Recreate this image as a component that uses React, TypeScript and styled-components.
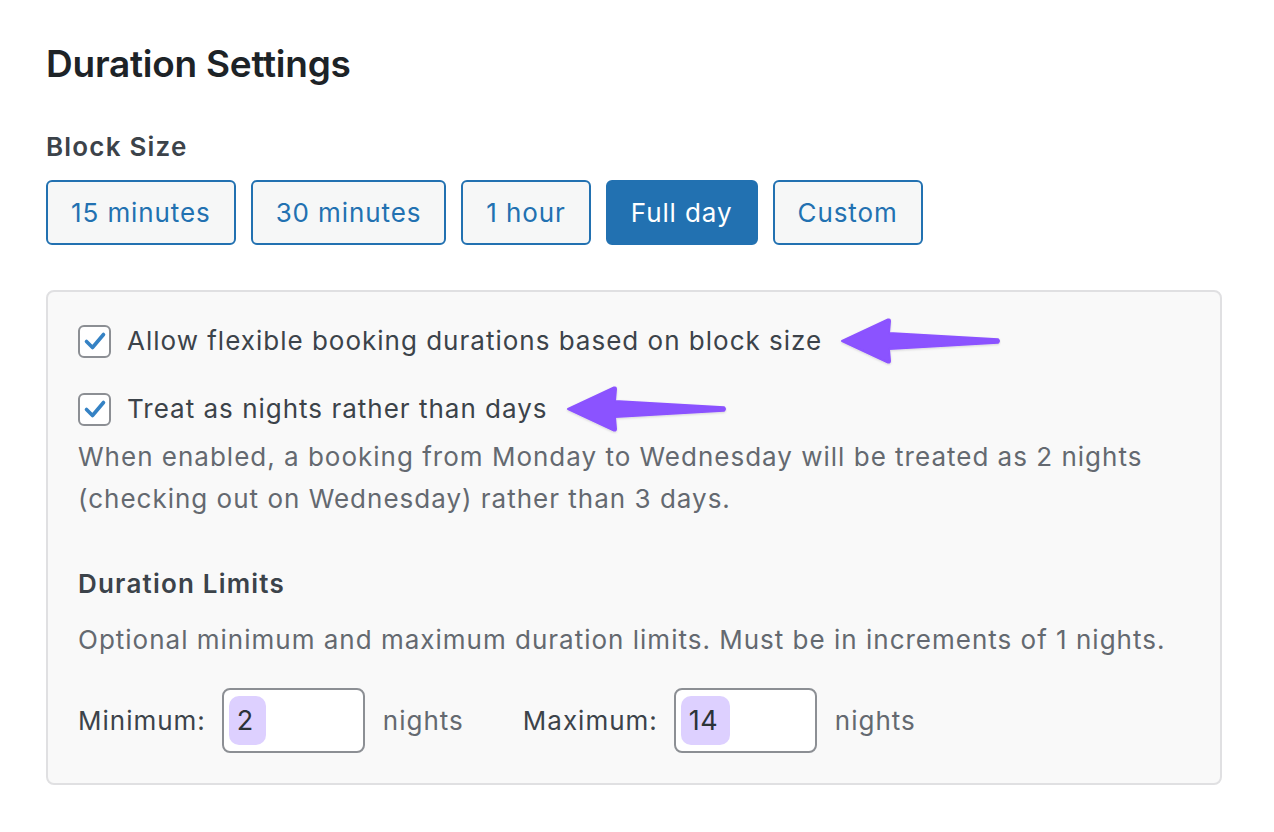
import React from 'react'
import styled, { createGlobalStyle } from 'styled-components'

const GlobalStyle = createGlobalStyle`
  html, body {
    margin: 0;
    padding: 0;
    background: #ffffff;
  }
  body {
    font-family: Inter, "Noto Sans", "Liberation Sans", sans-serif;
    -webkit-font-smoothing: antialiased;
  }
`

const Page = styled.div`
  width: 1274px;
  height: 832px;
  box-sizing: border-box;
  padding: 42px 52px 0 46px;
`

const Title = styled.h2`
  margin: 0;
  font-size: 37px;
  line-height: 44px;
  font-weight: 600;
  color: #1d2327;
  letter-spacing: -0.25px;
`

const FieldLabel = styled.div`
  margin-top: 42px;
  font-size: 26px;
  line-height: 38px;
  font-weight: 600;
  color: #3c434a;
  letter-spacing: 1.2px;
`

const ButtonGroup = styled.div`
  display: flex;
  gap: 15px;
  margin-top: 14px;
`

const SizeButton = styled.button<{ $active?: boolean }>`
  height: 65px;
  box-sizing: border-box;
  padding: 0 23px;
  border: 2px solid #2271b1;
  border-radius: 6px;
  background: ${({ $active }) => ($active ? '#2271b1' : '#f6f7f7')};
  color: ${({ $active }) => ($active ? '#ffffff' : '#2271b1')};
  font-family: inherit;
  font-size: 26px;
  font-weight: 400;
  letter-spacing: 0.9px;
  cursor: pointer;
`

const Panel = styled.div`
  margin-top: 45px;
  box-sizing: border-box;
  width: 1176px;
  height: 495px;
  padding: 32px 30px 0 30px;
  border: 2px solid #e0e0e2;
  border-radius: 8px;
  background: #f9f9f9;
  font-size: 26px;
  letter-spacing: 1px;
`

const CheckRow = styled.label<{ $gap?: number }>`
  display: flex;
  align-items: center;
  gap: 16px;
  margin-top: ${({ $gap }) => $gap ?? 0}px;
  line-height: 34px;
  color: #3c434a;
`

const Box = styled.span`
  display: inline-flex;
  align-items: center;
  justify-content: center;
  width: 33px;
  height: 33px;
  box-sizing: border-box;
  border: 2px solid #8c8f94;
  border-radius: 6px;
  background: #ffffff;
  flex-shrink: 0;
`

const ArrowSlot = styled.span`
  display: inline-flex;
  margin: -12px 0 -12px 1px;
`

const Description = styled.p`
  margin: 10px 0 0;
  line-height: 42px;
  color: #646970;
`

const SubHeading = styled.h3`
  margin: 46px 0 0;
  font-size: 26px;
  line-height: 36px;
  font-weight: 600;
  color: #3c434a;
  letter-spacing: 1.2px;
`

const Hint = styled.p`
  margin: 19px 0 0;
  line-height: 38px;
  color: #646970;
`

const LimitsRow = styled.div`
  display: flex;
  align-items: center;
  margin-top: 29px;
  color: #3c434a;
`

const LimitLabel = styled.span<{ $offset?: number }>`
  margin-left: ${({ $offset }) => $offset ?? 0}px;
  margin-right: 16px;
`

const Unit = styled.span`
  margin-left: 18px;
  color: #646970;
`

const NumberBox = styled.div`
  display: flex;
  align-items: center;
  width: 143px;
  height: 65px;
  box-sizing: border-box;
  padding-left: 5px;
  border: 2px solid #8c8f94;
  border-radius: 8px;
  background: #ffffff;
`

const Highlight = styled.span`
  display: inline-flex;
  align-items: center;
  height: 49px;
  padding: 0 12px 0 8px;
  border-radius: 10px;
  background: #ddd0ff;
  color: #2c3338;
  font-size: 27px;
  letter-spacing: 0.5px;
`

const Check = () => (
  <Box>
    <svg width="24" height="24" viewBox="0 0 24 24">
      <path
        d="M3.5 12.5 L9.5 18.5 L20.5 5.5"
        fill="none"
        stroke="#3582c4"
        strokeWidth="3.6"
        strokeLinecap="round"
        strokeLinejoin="round"
      />
    </svg>
  </Box>
)

// annotation arrow, tip on the left
const Arrow = ({ id, length }: { id: string; length: number }) => (
  <svg width={length} height="50" viewBox={`0 0 ${length} 50`}>
    <defs>
      <filter id={id} x="-10%" y="-30%" width="120%" height="160%">
        <feDropShadow dx="0" dy="1" stdDeviation="1.2" floodColor="#000" floodOpacity="0.15" />
      </filter>
    </defs>
    <path
      d={`M3 25 L49 3.5 Q51 3 51 5 L50 17 L${length - 3} 23.2 Q${length - 1} 25 ${length - 3} 26.8 L50 33 L51 45 Q51 47 49 46.5 Z`}
      fill="#8b52ff"
      stroke="#8b52ff"
      strokeWidth="2"
      strokeLinejoin="round"
      filter={`url(#${id})`}
    />
  </svg>
)

const App = () => (
  <>
    <GlobalStyle />
    <Page>
      <Title>Duration Settings</Title>
      <FieldLabel>Block Size</FieldLabel>
      <ButtonGroup>
        <SizeButton>15 minutes</SizeButton>
        <SizeButton>30 minutes</SizeButton>
        <SizeButton>1 hour</SizeButton>
        <SizeButton $active>Full day</SizeButton>
        <SizeButton>Custom</SizeButton>
      </ButtonGroup>
      <Panel>
        <CheckRow>
          <Check />
          Allow flexible booking durations based on block size
          <ArrowSlot>
            <Arrow id="arrow-a" length={162} />
          </ArrowSlot>
        </CheckRow>
        <CheckRow $gap={34}>
          <Check />
          Treat as nights rather than days
          <ArrowSlot>
            <Arrow id="arrow-b" length={162} />
          </ArrowSlot>
        </CheckRow>
        <Description>
          When enabled, a booking from Monday to Wednesday will be treated as 2 nights
          <br />
          (checking out on Wednesday) rather than 3 days.
        </Description>
        <SubHeading>Duration Limits</SubHeading>
        <Hint>Optional minimum and maximum duration limits. Must be in increments of 1 nights.</Hint>
        <LimitsRow>
          <LimitLabel>Minimum:</LimitLabel>
          <NumberBox>
            <Highlight>2</Highlight>
          </NumberBox>
          <Unit>nights</Unit>
          <LimitLabel $offset={59}>Maximum:</LimitLabel>
          <NumberBox>
            <Highlight>14</Highlight>
          </NumberBox>
          <Unit>nights</Unit>
        </LimitsRow>
      </Panel>
    </Page>
  </>
)

export default App
